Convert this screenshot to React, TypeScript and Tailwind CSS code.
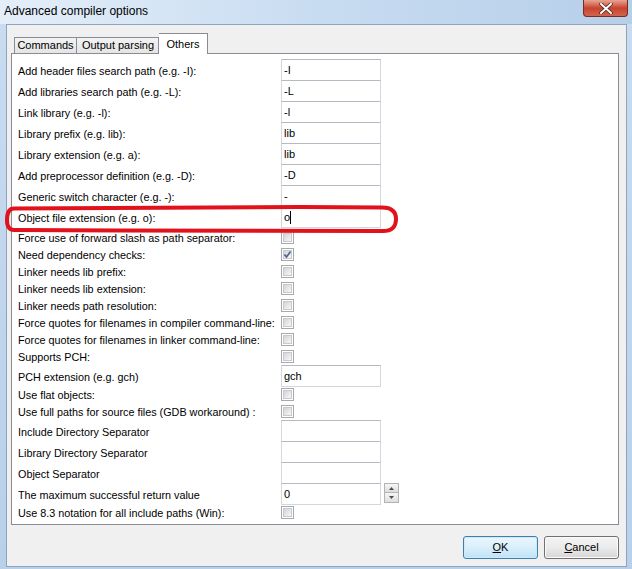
import React from "react";

type Row =
  | { kind: "text"; label: string; value?: string; caret?: boolean }
  | { kind: "check"; label: string; checked?: boolean; first?: boolean }
  | { kind: "spin"; label: string; value: string };

const rows: Row[] = [
  { kind: "text", label: "Add header files search path (e.g. -I):", value: "-I" },
  { kind: "text", label: "Add libraries search path (e.g. -L):", value: "-L" },
  { kind: "text", label: "Link library (e.g. -l):", value: "-l" },
  { kind: "text", label: "Library prefix (e.g. lib):", value: "lib" },
  { kind: "text", label: "Library extension (e.g. a):", value: "lib" },
  { kind: "text", label: "Add preprocessor definition (e.g. -D):", value: "-D" },
  { kind: "text", label: "Generic switch character (e.g. -):", value: "-" },
  { kind: "text", label: "Object file extension (e.g. o):", value: "o", caret: true },
  { kind: "check", label: "Force use of forward slash as path separator:", first: true },
  { kind: "check", label: "Need dependency checks:", checked: true },
  { kind: "check", label: "Linker needs lib prefix:" },
  { kind: "check", label: "Linker needs lib extension:" },
  { kind: "check", label: "Linker needs path resolution:" },
  { kind: "check", label: "Force quotes for filenames in compiler command-line:" },
  { kind: "check", label: "Force quotes for filenames in linker command-line:" },
  { kind: "check", label: "Supports PCH:" },
  { kind: "text", label: "PCH extension (e.g. gch)", value: "gch" },
  { kind: "check", label: "Use flat objects:" },
  { kind: "check", label: "Use full paths for source files (GDB workaround) :" },
  { kind: "text", label: "Include Directory Separator" },
  { kind: "text", label: "Library Directory Separator" },
  { kind: "text", label: "Object Separator" },
  { kind: "spin", label: "The maximum successful return value", value: "0" },
  { kind: "check", label: "Use 8.3 notation for all include paths (Win):" },
];

function TextBox({ value, caret }: { value?: string; caret?: boolean }) {
  return (
    <div className="w-[100px] h-[22px] self-start shrink-0 bg-white border border-[#d3d7de] border-t-[#b5b9c1] flex items-center pl-[2px] text-[11px] text-black">
      <span>{value}</span>
      {caret && <span className="inline-block w-[1px] h-[13px] bg-black" />}
    </div>
  );
}

function CheckBox({ checked }: { checked?: boolean }) {
  return (
    <div className="relative w-[13px] h-[13px] border border-[#a9a9a9] bg-white shrink-0">
      <div className="absolute inset-[1px] border border-[#c6c9cd] bg-gradient-to-br from-[#d2d4d7] to-[#f7f7f7]" />
      {checked && (
        <svg className="absolute inset-0" width="11" height="11" viewBox="0 0 11 11">
          <path d="M2.5 5.5 L4.5 8 L8.5 2.5" fill="none" stroke="#4a5f8a" strokeWidth="1.6" />
        </svg>
      )}
    </div>
  );
}

function Spinner() {
  return (
    <div className="flex flex-col ml-[3px] self-start">
      <div className="w-[15px] h-[10px] border border-[#b3b3b3] bg-gradient-to-b from-[#f6f6f6] to-[#dedede] flex items-center justify-center">
        <svg width="5" height="3" viewBox="0 0 5 3"><path d="M0 3 L2.5 0 L5 3 Z" fill="#4d4d4d" /></svg>
      </div>
      <div className="w-[15px] h-[10px] border border-[#b3b3b3] border-t-0 bg-gradient-to-b from-[#f6f6f6] to-[#dedede] flex items-center justify-center">
        <svg width="5" height="3" viewBox="0 0 5 3"><path d="M0 0 L2.5 3 L5 0 Z" fill="#4d4d4d" /></svg>
      </div>
    </div>
  );
}

export default function App() {
  return (
    <div className="relative w-[632px] h-[569px] overflow-hidden bg-gradient-to-b from-[#c9dcf0] to-[#b8d0ea] font-['Liberation_Sans',Arial,sans-serif] flex flex-col">
      {/* title bar */}
      <div className="h-[24px] shrink-0 flex items-center pl-[4px] pb-[2px] bg-gradient-to-r from-[#e4eef9] via-[#c8dcf1] to-[#b6cfe9]">
        <span className="text-[12px] text-black">Advanced compiler options</span>
      </div>
      <div className="absolute top-0 right-[4px] w-[45px] h-[17px] rounded-b-[4px] border border-t-0 border-[#7a2a22] bg-gradient-to-b from-[#e8a493] via-[#c7432e] to-[#d0654c] flex items-center justify-center">
        <svg width="14" height="11" viewBox="0 0 14 11">
          <path d="M2 1 L12 10 M12 1 L2 10" stroke="#40201a" strokeWidth="3.4" strokeLinecap="round" />
          <path d="M2 1 L12 10 M12 1 L2 10" stroke="#ffffff" strokeWidth="2" strokeLinecap="round" />
        </svg>
      </div>

      {/* client area */}
      <div className="flex-1 ml-[6px] mr-[5px] mb-[2px] bg-[#f0f0f0] border border-[#8fa3bd] pl-[4px] pt-[8px] flex flex-col">
        {/* tabs */}
        <div className="h-[20px] flex items-end pl-[3px] w-[608px] text-[11px] text-black">
          <div className="w-[63px] h-[16px] border border-b-0 border-[#898c95] bg-gradient-to-b from-[#f3f3f3] to-[#e5e5e5] flex items-center justify-center">
            Commands
          </div>
          <div className="w-[82px] h-[16px] border border-b-0 border-l-0 border-[#898c95] bg-gradient-to-b from-[#f3f3f3] to-[#e5e5e5] flex items-center justify-center">
            <span className="ml-[1px]">Output parsing</span>
          </div>
          <div className="relative z-10 w-[49px] h-[21px] -mb-[1px] border border-b-0 border-l-0 border-[#898c95] bg-white flex justify-center pt-[2px]">
            Others
          </div>
        </div>
        {/* panel */}
        <div className="w-[608px] h-[472px] shrink-0 border border-[#898c95] bg-white pl-[6px] pt-[5px] flex flex-col text-[10.8px] text-black">
          {rows.map((r, i) => {
            if (r.kind === "check") {
              return (
                <div key={i} className={`h-[17px] flex items-center ${r.first ? "mt-[2px]" : ""}`}>
                  <div className="w-[263px] shrink-0 whitespace-nowrap pt-[1px]">{r.label}</div>
                  <CheckBox checked={r.checked} />
                </div>
              );
            }
            return (
              <div key={i} className="h-[21px] flex items-center">
                <div className="w-[263px] shrink-0 whitespace-nowrap pt-[4px]">{r.label}</div>
                <TextBox value={r.value} caret={r.kind === "text" ? r.caret : false} />
                {r.kind === "spin" && <Spinner />}
              </div>
            );
          })}
        </div>
        {/* buttons */}
        <div className="w-[608px] mt-[11px] flex justify-end gap-[6px] text-[11px] text-black">
          <div className="w-[75px] h-[23px] rounded-[3px] border border-[#3c7fb1] bg-gradient-to-b from-[#ecf7fd] via-[#d9effb] to-[#bfe2f5] flex items-center justify-center shadow-[inset_0_0_0_1px_#cdeafa]">
            <span><span className="underline">O</span>K</span>
          </div>
          <div className="w-[75px] h-[23px] rounded-[3px] border border-[#707070] bg-gradient-to-b from-[#f4f4f4] via-[#ebebeb] to-[#d6d6d6] flex items-center justify-center shadow-[inset_0_0_0_1px_#fbfbfb]">
            <span><span className="underline">C</span>ancel</span>
          </div>
        </div>
      </div>

      {/* red annotation */}
      <svg className="absolute left-0 top-0 pointer-events-none" width="632" height="569" viewBox="0 0 632 569">
        <path
          d="M14 208.5 L300 207 L382 207.5 Q396 207.5 396 219 Q396 231.5 382 231 L120 230.5 L14 230 Q7 230 7 220 Q7 208.5 14 208.5 Z"
          fill="none"
          stroke="#e2121c"
          strokeWidth="4"
        />
      </svg>
    </div>
  );
}
